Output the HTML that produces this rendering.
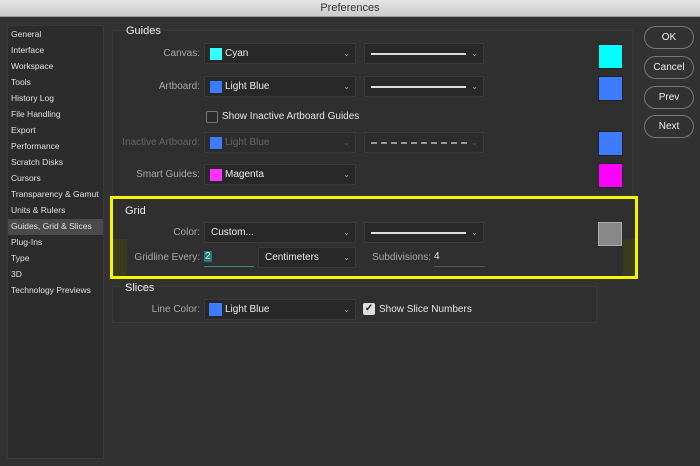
<!DOCTYPE html><html><head><style>
*{margin:0;padding:0;box-sizing:border-box}
body{width:700px;height:466px;background:#323232;font-family:"Liberation Sans",sans-serif;font-size:9.5px;color:#e6e6e6;position:relative;overflow:hidden}
.a{position:absolute}
.title{left:0;top:0;width:700px;height:17px;background:linear-gradient(#e4e4e4,#cbcbcb);border-bottom:1px solid #9a9a9a;color:#333;text-align:center;font-size:11px;line-height:17px}
.side{left:7px;top:25px;width:97px;height:434px;background:#2c2c2c;border:1px solid #393939}
.si{position:absolute;left:3px;font-size:8.5px;color:#e0e0e0}
.panel{background:#2f2f2f;border:1px solid #3a3a3a}
.h{font-size:11px;color:#eee}
.lab{text-align:right;color:#a8a8a8;font-size:10px}
.dd{height:21px;background:#282828;border:1px solid #3a3a3a;font-size:10px;line-height:20px;color:#eee}
.dd .c{position:absolute;right:5px;top:0;font-size:8px;color:#aaa}
.sw{position:absolute;left:5px;top:4px;width:12px;height:12px}
.bs{width:25px;height:25px;border:1px solid #222}
.btn{left:644px;width:50px;height:23px;border:1.5px solid #777;border-radius:12px;text-align:center;line-height:21px;font-size:10px;color:#eee}
.ln{position:absolute;left:6px;top:9px;width:95px;height:1.5px;background:#ddd}
</style></head><body>
<div class="a title">Preferences</div>
<div class="a side">
<div class="si" style="top:3px">General</div>
<div class="si" style="top:19px">Interface</div>
<div class="si" style="top:35px">Workspace</div>
<div class="si" style="top:51px">Tools</div>
<div class="si" style="top:67px">History Log</div>
<div class="si" style="top:83px">File Handling</div>
<div class="si" style="top:99px">Export</div>
<div class="si" style="top:115px">Performance</div>
<div class="si" style="top:131px">Scratch Disks</div>
<div class="si" style="top:147px">Cursors</div>
<div class="si" style="top:163px">Transparency &amp; Gamut</div>
<div class="si" style="top:179px">Units &amp; Rulers</div>
<div class="a" style="left:0;top:193px;width:95px;height:16px;background:#4a4a4a"></div>
<div class="si" style="top:195px">Guides, Grid &amp; Slices</div>
<div class="si" style="top:211px">Plug-Ins</div>
<div class="si" style="top:227px">Type</div>
<div class="si" style="top:243px">3D</div>
<div class="si" style="top:259px">Technology Previews</div>
</div>
<div class="a panel" style="left:112px;top:30px;width:521px;height:166px"></div>
<div class="a h" style="left:126px;top:25px">Guides</div>
<div class="a lab" style="left:110px;top:48px;width:90px">Canvas:</div>
<div class="a dd" style="left:204px;top:43px;width:152px"><div class="sw" style="background:#3ff"></div><span style="margin-left:20px">Cyan</span><span class="c">&#8964;</span></div>
<div class="a dd" style="left:364px;top:43px;width:120px"><div class="ln"></div><span class="c">&#8964;</span></div>
<div class="a bs" style="left:598px;top:44px;background:#0ff"></div>
<div class="a lab" style="left:110px;top:81px;width:90px">Artboard:</div>
<div class="a dd" style="left:204px;top:76px;width:152px"><div class="sw" style="background:#3d7bff"></div><span style="margin-left:20px">Light Blue</span><span class="c">&#8964;</span></div>
<div class="a dd" style="left:364px;top:76px;width:120px"><div class="ln"></div><span class="c">&#8964;</span></div>
<div class="a bs" style="left:598px;top:76px;background:#3d7bff"></div>
<div class="a" style="left:206px;top:111px;width:12px;height:12px;border:1px solid #777;border-radius:2px;background:#2a2a2a"></div>
<div class="a" style="left:222px;top:111px;font-size:10px">Show Inactive Artboard Guides</div>
<div class="a lab" style="top:137px;width:159px;left:41px;color:#666">Inactive Artboard:</div>
<div class="a dd" style="left:204px;top:132px;width:152px;background:#2c2c2c;color:#666"><div class="sw" style="background:#3d7bff"></div><span style="margin-left:20px">Light Blue</span><span class="c" style="color:#555">&#8964;</span></div>
<div class="a dd" style="left:364px;top:132px;width:120px;background:#2c2c2c"><div class="ln" style="background:repeating-linear-gradient(90deg,#999 0 6px,transparent 6px 10px);width:96px"></div><span class="c" style="color:#555">&#8964;</span></div>
<div class="a bs" style="left:598px;top:131px;background:#3d7bff"></div>
<div class="a lab" style="left:110px;top:169px;width:90px">Smart Guides:</div>
<div class="a dd" style="left:204px;top:164px;width:152px"><div class="sw" style="background:#f3f"></div><span style="margin-left:20px">Magenta</span><span class="c">&#8964;</span></div>
<div class="a bs" style="left:598px;top:163px;background:#f0f"></div>
<div class="a" style="left:110px;top:196px;width:528px;height:83px;border:3px solid #f5f500;background:#2f2f2f"></div>
<div class="a" style="left:113px;top:239px;width:14px;height:37px;background:#3a3a1c"></div>
<div class="a" style="left:623px;top:239px;width:12px;height:37px;background:#3a3a1c"></div>
<div class="a h" style="left:125px;top:205px">Grid</div>
<div class="a lab" style="left:110px;top:227px;width:90px">Color:</div>
<div class="a dd" style="left:204px;top:222px;width:152px"><span style="margin-left:6px">Custom...</span><span class="c">&#8964;</span></div>
<div class="a dd" style="left:364px;top:222px;width:120px"><div class="ln"></div><span class="c">&#8964;</span></div>
<div class="a bs" style="left:598px;top:222px;width:24px;height:24px;background:#888;border-color:#aaa"></div>
<div class="a lab" style="left:110px;top:252px;width:90px">Gridline Every:</div>
<div class="a" style="left:204px;top:251px;width:50px;height:16px;border-bottom:1px solid #3a8a8a"><span style="background:#2a7a7a;font-size:10px;padding:0 1px">2</span></div>
<div class="a dd" style="left:258px;top:247px;width:98px"><span style="margin-left:6px">Centimeters</span><span class="c">&#8964;</span></div>
<div class="a lab" style="left:340px;top:252px;width:91px">Subdivisions:</div>
<div class="a" style="left:434px;top:251px;width:51px;height:16px;border-bottom:1px solid #555;font-size:10px">4</div>
<div class="a panel" style="left:112px;top:286px;width:485px;height:37px"></div>
<div class="a h" style="left:125px;top:282px">Slices</div>
<div class="a lab" style="left:110px;top:304px;width:90px">Line Color:</div>
<div class="a dd" style="left:204px;top:299px;width:152px"><div class="sw" style="background:#3d7bff;left:4px;top:3px;width:13px;height:13px"></div><span style="margin-left:20px">Light Blue</span><span class="c">&#8964;</span></div>
<div class="a" style="left:363px;top:303px;width:12px;height:12px;background:#ddd;border-radius:2px;color:#222;font-size:10px;line-height:12px;text-align:center;font-weight:bold">&#10003;</div>
<div class="a" style="left:379px;top:304px;font-size:10px">Show Slice Numbers</div>
<div class="a btn" style="top:26px">OK</div>
<div class="a btn" style="top:56px">Cancel</div>
<div class="a btn" style="top:86px">Prev</div>
<div class="a btn" style="top:115px">Next</div>
</body></html>
